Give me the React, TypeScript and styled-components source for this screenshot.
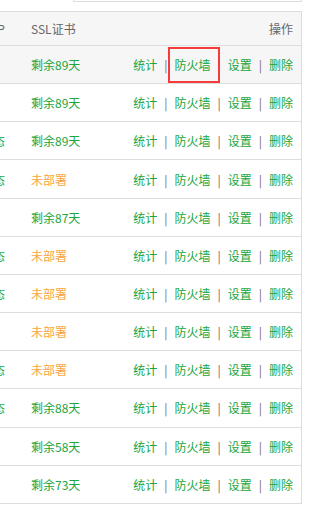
import React from "react";
import styled, { createGlobalStyle } from "styled-components";

const Global = createGlobalStyle`
  html, body { margin: 0; padding: 0; background: #fff; }
  body { font-family: "Noto Sans CJK SC", "Noto Sans", sans-serif; font-size: 12px; }
  #root { width: 312px; height: 513px; overflow: hidden; }
`;

const Page = styled.div`
  width: 312px;
  height: 513px;
  overflow: hidden;
`;

const TopBox = styled.div`
  margin-left: 73px;
  width: 227px;
  height: 1px;
  border: 1px solid #dddddd;
  border-top: none;
`;

const Table = styled.table`
  margin-top: 9px;
  margin-left: -28px;
  width: 330px;
  border-collapse: collapse;
  border: 1px solid #dddddd;
  table-layout: fixed;
  color: #666;
`;

const HeadRow = styled.tr`
  height: 34px;
  background: #f6f6f6;
`;

const Row = styled.tr<{ $active?: boolean }>`
  height: 38.17px;
  background: ${(p) => (p.$active ? "#f6f6f6" : "#ffffff")};
`;

const Th = styled.th<{ $w?: number; $right?: boolean }>`
  ${(p) => (p.$w ? `width: ${p.$w}px;` : "")}
  padding: 0 8px;
  text-align: ${(p) => (p.$right ? "right" : "left")};
  font-weight: normal;
  color: #666;
  white-space: nowrap;
  border-bottom: 1px solid #dddddd;
`;

const Td = styled.td<{ $right?: boolean }>`
  padding: 0 8px;
  text-align: ${(p) => (p.$right ? "right" : "left")};
  white-space: nowrap;
  border-bottom: 1px solid #dddddd;
  vertical-align: middle;
`;

const Php = styled.span`
  color: #20a53a;
`;

const Ssl = styled.span<{ $none?: boolean }>`
  color: ${(p) => (p.$none ? "#f7a541" : "#20a53a")};
`;

const Actions = styled.div`
  display: flex;
  justify-content: flex-end;
  align-items: center;
  gap: 7px;
`;

const Link = styled.a<{ $mark?: boolean }>`
  position: relative;
  color: #20a53a;
  text-decoration: none;
  cursor: pointer;
  ${(p) =>
    p.$mark
      ? `&::after {
          content: "";
          position: absolute;
          left: -6px;
          right: -10px;
          top: -9px;
          bottom: -10px;
          border: 2px solid #f53b3b;
        }`
      : ""}
`;

const Sep = styled.span`
  color: #7a6a66;
`;

type Site = { php: string; ssl: string };

const sites: Site[] = [
  { php: "7.4", ssl: "剩余89天" },
  { php: "7.4", ssl: "剩余89天" },
  { php: "静态", ssl: "剩余89天" },
  { php: "静态", ssl: "未部署" },
  { php: "7.4", ssl: "剩余87天" },
  { php: "静态", ssl: "未部署" },
  { php: "静态", ssl: "未部署" },
  { php: "7.4", ssl: "未部署" },
  { php: "静态", ssl: "未部署" },
  { php: "静态", ssl: "剩余88天" },
  { php: "7.4", ssl: "剩余58天" },
  { php: "7.4", ssl: "剩余73天" },
];

export default function App() {
  return (
    <Page>
      <Global />
      <TopBox />
      <Table>
        <thead>
          <HeadRow>
            <Th $w={34}>PHP</Th>
            <Th $w={84}>SSL证书</Th>
            <Th $right>操作</Th>
          </HeadRow>
        </thead>
        <tbody>
          {sites.map((s, i) => (
            <Row key={i} $active={i === 0}>
              <Td>
                <Php>{s.php}</Php>
              </Td>
              <Td>
                <Ssl $none={s.ssl === "未部署"}>{s.ssl}</Ssl>
              </Td>
              <Td $right>
                <Actions>
                  <Link>统计</Link>
                  <Sep>|</Sep>
                  <Link $mark={i === 0}>防火墙</Link>
                  <Sep>|</Sep>
                  <Link>设置</Link>
                  <Sep>|</Sep>
                  <Link>删除</Link>
                </Actions>
              </Td>
            </Row>
          ))}
        </tbody>
      </Table>
    </Page>
  );
}
